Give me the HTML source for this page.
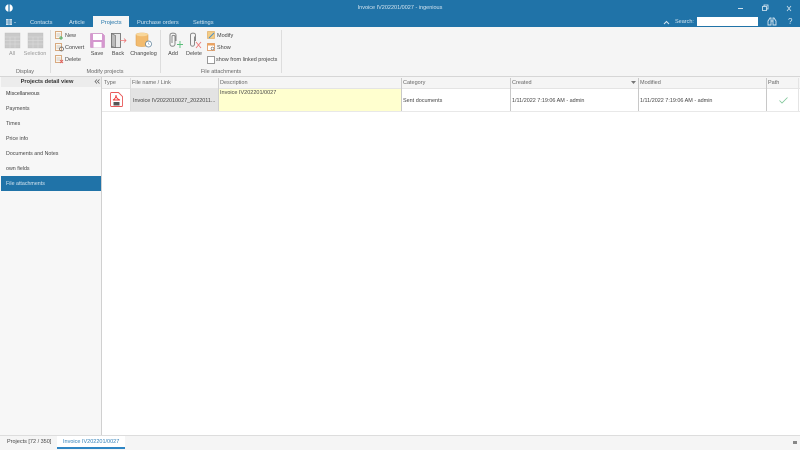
<!DOCTYPE html>
<html><head><meta charset="utf-8"><style>
html,body{margin:0;padding:0;width:800px;height:450px;overflow:hidden;background:#f5f5f5;font-family:"Liberation Sans",sans-serif}
#r{position:absolute;left:0;top:0;width:800px;height:450px;overflow:hidden;filter:blur(.25px)}
.a{position:absolute}
.t{position:absolute;font-size:5.5px;line-height:8px;color:#444;white-space:nowrap}
.c{transform:translateX(-50%)}
.w{color:#d5e5f0}
.g{color:#666}
svg{position:absolute;overflow:visible}
.v{position:absolute;width:1px;background:#c8c8c8}
</style></head><body><div id="r">
<div class="a" style="left:0;top:0;width:800px;height:27px;background:#2073a8"></div>
<svg style="left:4px;top:3px" width="10" height="10" viewBox="0 0 10 10"><circle cx="5" cy="5" r="3.8" fill="#fff"/><rect x="4.4" y="0.5" width="1.2" height="9" fill="#2073a8"/></svg>
<svg style="left:6px;top:19px" width="10" height="8" viewBox="0 0 10 8"><rect x="0" y="0" width="6" height="6" fill="#cfe0ec"/><path d="M0 2h6M0 4h6M3 0v6" stroke="#2073a8" stroke-width=".6"/><path d="M8 3h2L9 4z" fill="#cfe0ec"/></svg>
<div class="t w" style="left:30px;top:18.500px;font-size:5.700px">Contacts</div>
<div class="t w" style="left:69px;top:18.500px;font-size:5.700px">Article</div>
<div class="a" style="left:93px;top:16px;width:36px;height:12px;background:#f5f5f5"></div>
<div class="t" style="left:101px;top:18.500px;color:#2073a8;font-size:5.700px">Projects</div>
<div class="t w" style="left:137px;top:18.500px;font-size:5.700px">Purchase orders</div>
<div class="t w" style="left:193px;top:18.500px;font-size:5.700px">Settings</div>
<div class="t c w" style="left:400px;top:4px">Invoice IV202201/0027 - ingenious</div>
<svg style="left:738px;top:4px" width="56" height="9" viewBox="0 0 56 9"><path d="M0 4.500h5" stroke="#cfe0ec"/><path d="M24.500 2.500h4v4h-4zM26 2.500V1h4v4h-1.500" fill="none" stroke="#e3eef5" stroke-width=".8"/><path d="M49 2l4 5M53 2l-4 5" stroke="#cfe0ec" stroke-width=".8"/></svg>
<svg style="left:663px;top:20px" width="7" height="5" viewBox="0 0 7 5"><path d="M1 4l2.500-2.500L6 4" fill="none" stroke="#d5e5f0"/></svg>
<div class="t w" style="left:675px;top:18px">Search:</div>
<div class="a" style="left:697px;top:17px;width:61px;height:9px;background:#fff"></div>
<svg style="left:767px;top:17px" width="10" height="9" viewBox="0 0 10 9"><path d="M1 8V4l2-3h1v7zM9 8V4L7 1H6v7zM4 4h2" fill="none" stroke="#d5e5f0" stroke-width=".9"/></svg>
<div class="t w" style="left:788px;top:17px;font-size:8px;line-height:10px">?</div>

<div class="a" style="left:0;top:28px;width:800px;height:49px;background:#f5f5f5"></div>
<div class="v" style="left:50px;top:30px;height:43px;background:#ddd"></div>
<div class="v" style="left:160px;top:30px;height:43px;background:#ddd"></div>
<div class="v" style="left:281px;top:30px;height:43px;background:#ddd"></div>

<svg style="left:5px;top:33px" width="39" height="15" viewBox="0 0 39 15"><g fill="#c9c9c9" stroke="#bbb" stroke-width=".4"><rect x="0" y="0" width="15" height="15"/><rect x="23" y="0" width="15" height="15"/></g><path d="M0 4h15M0 7.500h15M0 11h15M5 4v11M10 4v11M23 4h15M23 7.500h15M23 11h15M28 4v11M33 4v11" stroke="#dedede" stroke-width=".5"/></svg>
<div class="t c g" style="left:12px;top:50px;color:#999">All</div>
<div class="t c" style="left:35px;top:50px;color:#999">Selection</div>
<div class="t c g" style="left:25px;top:68px">Display</div>

<svg style="left:55px;top:31px" width="9" height="35" viewBox="0 0 9 35"><g fill="#fdf7ee" stroke="#c98a52" stroke-width=".7"><rect x=".5" y=".5" width="6" height="7"/><rect x=".5" y="12.500" width="6" height="7"/><rect x=".5" y="24.500" width="6" height="7"/></g><path d="M1.500 3h4M1.500 5h4M1.500 15h4M1.500 17h4M1.500 27h4M1.500 29h4" stroke="#999" stroke-width=".5"/><path d="M6 5v4M4 7h4" stroke="#4db36a"/><circle cx="6.500" cy="18" r="2" fill="none" stroke="#555" stroke-width=".7"/><path d="M5 29l3 3M8 29l-3 3" stroke="#e06060" stroke-width=".9"/></svg>
<div class="t" style="left:65px;top:31.500px">New</div>
<div class="t" style="left:65px;top:43.500px">Convert</div>
<div class="t" style="left:65px;top:55.500px">Delete</div>

<svg style="left:90px;top:33px" width="15" height="15" viewBox="0 0 15 15"><path d="M.5.500h12l2 2v12H.5z" fill="#d597cf" stroke="#c27fbb" stroke-width=".5"/><rect x="3" y="1" width="9" height="6" fill="#fff"/><rect x="3.500" y="9" width="8" height="5.500" fill="#fff"/></svg>
<div class="t c" style="left:97px;top:50px">Save</div>
<svg style="left:111px;top:33px" width="16" height="15" viewBox="0 0 16 15"><path d="M.5.500h9v14h-9z" fill="#e8e8e8" stroke="#666" stroke-width=".8"/><path d="M.5.500l4 2v12l-4-1z" fill="#bbb" stroke="#666" stroke-width=".6"/><path d="M9 7.500h6M13 5.500l2 2-2 2" fill="none" stroke="#e77" stroke-width=".8"/></svg>
<div class="t c" style="left:118px;top:50px">Back</div>
<svg style="left:136px;top:32px" width="16" height="16" viewBox="0 0 16 16"><path d="M0 2.500C0 .5 12 .5 12 2.500V13c0 2-12 2-12 0z" fill="#f2bb6e" stroke="#d99a45" stroke-width=".5"/><ellipse cx="6" cy="2.500" rx="6" ry="1.800" fill="#f8d79b"/><circle cx="12.500" cy="12" r="3" fill="#fff" stroke="#5b7f99" stroke-width=".7"/><path d="M12.500 10.500V12l1 .7" fill="none" stroke="#5b7f99" stroke-width=".5"/></svg>
<div class="t c" style="left:143.500px;top:50px">Changelog</div>
<div class="t c g" style="left:105px;top:68px">Modify projects</div>

<svg style="left:168px;top:32px" width="16" height="17" viewBox="0 0 16 17"><path d="M8 9V3C8 .5 2 .5 2 3v9c0 3 5 3 5 0V4.500c0-1.500-3-1.500-3 0V11" fill="none" stroke="#888" stroke-width="1"/><path d="M12 9v7M9 12.500h6" stroke="#5bbf7b" stroke-width=".9"/></svg>
<div class="t c" style="left:173px;top:50px">Add</div>
<svg style="left:189px;top:32px" width="14" height="17" viewBox="0 0 14 17"><path d="M6.500 9V3c0-2.500-5-2.500-5 0v9c0 3 4 3 4 0V4.500" fill="none" stroke="#888" stroke-width="1"/><path d="M7 10l5 6M12 10l-5 6" stroke="#e77" stroke-width=".9"/></svg>
<div class="t c" style="left:194px;top:50px">Delete</div>
<svg style="left:207px;top:31px" width="9" height="22" viewBox="0 0 9 22"><rect x=".5" y=".5" width="7" height="7" fill="#f4cd86" stroke="#d99a45" stroke-width=".5"/><path d="M2 7l5-5" stroke="#4a8fc9"/><rect x=".5" y="12.500" width="7" height="7" fill="#fff" stroke="#d9823f" stroke-width=".7"/><rect x=".5" y="12.500" width="7" height="2" fill="#eba35f"/><circle cx="5.500" cy="17.500" r="1.500" fill="none" stroke="#555" stroke-width=".5"/></svg>
<div class="t" style="left:217px;top:31.500px">Modify</div>
<div class="t" style="left:217px;top:43.500px">Show</div>
<div class="a" style="left:207px;top:56px;width:5.500px;height:5.500px;background:#fff;border:.5px solid #999"></div>
<div class="t" style="left:216px;top:55.500px;font-size:5.450px">show from linked projects</div>
<div class="t c g" style="left:221px;top:68px">File attachments</div>

<div class="a" style="left:0;top:76px;width:800px;height:1px;background:#d6d6d6"></div>
<div class="a" style="left:0;top:77px;width:102px;height:358px;background:#f7f7f7"></div>
<div class="a" style="left:1px;top:77px;width:100px;height:10px;background:#ececec"></div>
<div class="a" style="left:101px;top:77px;width:1px;height:358px;background:#d0d0d0"></div>
<div class="t c" style="left:47px;top:78px;font-weight:bold;color:#333;font-size:5.700px">Projects detail view</div>
<svg style="left:94px;top:79px" width="6" height="5" viewBox="0 0 6 5"><path d="M3 .5L1 2.500l2 2M5.500.5l-2 2 2 2" fill="none" stroke="#555" stroke-width=".7"/></svg>
<div class="t" style="left:6px;top:89.500px;font-size:5.300px;color:#333">Miscellaneous</div>
<div class="t" style="left:6px;top:104.500px;font-size:5.300px">Payments</div>
<div class="t" style="left:6px;top:119.500px;font-size:5.300px">Times</div>
<div class="t" style="left:6px;top:134.500px;font-size:5.300px">Price info</div>
<div class="t" style="left:6px;top:149.500px;font-size:5.300px">Documents and Notes</div>
<div class="t" style="left:6px;top:164.500px;font-size:5.300px">own fields</div>
<div class="a" style="left:1px;top:176px;width:100px;height:15px;background:#2073a8"></div>
<div class="t w" style="left:6px;top:179.500px;font-size:5.300px">File attachments</div>

<div class="a" style="left:102px;top:77px;width:698px;height:358px;background:#fff"></div>
<div class="a" style="left:102px;top:77px;width:698px;height:11px;background:#f5f5f5"></div>
<div class="a" style="left:102px;top:88px;width:698px;height:1px;background:#e4e4e4"></div>
<div class="a" style="left:131px;top:89px;width:87px;height:22px;background:#e3e3e3"></div>
<div class="a" style="left:219px;top:89px;width:182px;height:22px;background:#ffffcf"></div>
<div class="a" style="left:102px;top:111px;width:698px;height:1px;background:#e8e8e8"></div>
<div class="v" style="left:130px;top:78px;height:33px;background:#ddd"></div>
<div class="v" style="left:218px;top:78px;height:33px;background:#d0d0d0"></div>
<div class="v" style="left:401px;top:78px;height:33px"></div>
<div class="v" style="left:510px;top:78px;height:33px"></div>
<div class="v" style="left:638px;top:78px;height:33px"></div>
<div class="v" style="left:766px;top:78px;height:33px"></div>
<div class="v" style="left:798px;top:78px;height:33px;background:#e4e4e4"></div>
<div class="t g" style="left:104px;top:79px">Type</div>
<div class="t g" style="left:132px;top:79px">File name / Link</div>
<div class="t g" style="left:220px;top:79px">Description</div>
<div class="t g" style="left:403px;top:79px">Category</div>
<div class="t g" style="left:512px;top:79px">Created</div>
<svg style="left:631px;top:81px" width="5" height="3" viewBox="0 0 5 3"><path d="M0 0h5L2.500 3z" fill="#777"/></svg>
<div class="t g" style="left:640px;top:79px">Modified</div>
<div class="t g" style="left:768px;top:79px">Path</div>
<svg style="left:110px;top:92px" width="13" height="15" viewBox="0 0 13 15"><path d="M.5 1.500a1 1 0 0 1 1-1h7l4 4v9a1 1 0 0 1-1 1h-10a1 1 0 0 1-1-1z" fill="#fff" stroke="#e85a5a" stroke-width=".9"/><path d="M3 8c2-1 3-3 3-5 0 2 1 4 4 5-2 0-5 0-7 0z" fill="none" stroke="#e33" stroke-width=".9"/><rect x="3.500" y="10" width="6" height="3.500" fill="#555"/></svg>
<div class="t" style="left:133px;top:96.500px;font-size:5.450px">Invoice IV2022010027_2022011...</div>
<div class="t" style="left:220px;top:88.500px">Invoice IV202201/0027</div>
<div class="t" style="left:403px;top:96.500px;font-size:5.450px">Sent documents</div>
<div class="t" style="left:512px;top:96.500px;font-size:5.450px">1/11/2022 7:19:06 AM - admin</div>
<div class="t" style="left:640px;top:96.500px;font-size:5.450px">1/11/2022 7:19:06 AM - admin</div>
<svg style="left:779px;top:97px" width="9" height="7" viewBox="0 0 9 7"><path d="M.5 3.500L3 6 8.500.5" fill="none" stroke="#7cc596" stroke-width=".8"/></svg>

<div class="a" style="left:0;top:435px;width:800px;height:15px;background:#f5f5f5;border-top:1px solid #ddd;box-sizing:border-box"></div>
<div class="t" style="left:7px;top:438px">Projects [72 / 350]</div>
<div class="a" style="left:57px;top:436px;width:68px;height:12px;background:#fff"></div>
<div class="a" style="left:57px;top:447px;width:68px;height:2px;background:#2f86c4"></div>
<div class="t" style="left:63px;top:438px;color:#2f7fb8">Invoice IV202201/0027</div>
<div class="a" style="left:793px;top:441px;width:4px;height:3px;background:#888"></div>
</div></body></html>
